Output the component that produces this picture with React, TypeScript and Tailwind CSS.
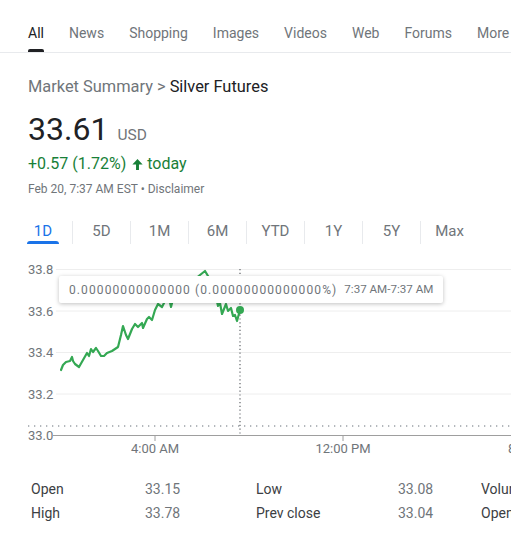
export default function App() {
  const nav = ["All", "News", "Shopping", "Images", "Videos", "Web", "Forums", "More"];
  const tabs = ["1D", "5D", "1M", "6M", "YTD", "1Y", "5Y", "Max"];
  const Y0 = 255;
  const pts: [number, number][] = [
    [61, 369], [63, 364], [66, 361], [70, 360], [72, 356], [73, 360], [75, 363], [79, 366], [83, 359], [87, 352],
    [89, 355], [91, 348], [93, 351], [96, 347], [98, 350], [101, 355], [104, 355], [107, 352], [112, 350], [118, 346],
    [121, 334], [123, 325], [126, 334], [128, 338], [132, 328], [135, 323], [138, 326], [142, 322], [143, 327], [147, 318],
    [149, 316], [152, 319], [155, 309], [158, 303], [162, 306], [165, 300], [168, 292], [171, 306], [175, 290], [185, 285],
    [195, 278], [200, 274], [205, 270], [208, 275], [212, 285], [216, 296], [218, 305], [220, 302], [222, 313], [226, 303],
    [228, 310], [231, 307], [233, 315], [235, 314], [237, 320], [240, 309],
  ];
  const d = pts.map((p, i) => `${i === 0 ? "M" : "L"}${p[0]} ${p[1] - Y0}`).join(" ");
  const grid = [
    { v: "33.8", y: 268.5 },
    { v: "33.6", y: 310 },
    { v: "33.4", y: 351.5 },
    { v: "33.2", y: 393 },
  ];
  const stats = [
    ["Open", "33.15", "Low", "33.08", "Volume"],
    ["High", "33.78", "Prev close", "33.04", "Open interest"],
  ];
  return (
    <div className="w-[511px] h-[534px] overflow-hidden bg-white font-['Roboto',sans-serif] text-[#202124]">
      <div className="flex h-[53px] gap-[25px] overflow-hidden whitespace-nowrap border-b border-[#e8eaed] pl-[28px]">
        {nav.map((n, i) => (
          <div key={n} className="flex h-full shrink-0 flex-col">
            <div className={i === 0 ? "pt-[23px] text-[14px] leading-[20px] text-[#202124]" : "pt-[23px] text-[14px] leading-[20px] text-[#70757a]"}>
              {n}
            </div>
            <div className="flex-1" />
            {i === 0 && <div className="h-[3px] rounded-t-[2px] bg-[#202124]" />}
          </div>
        ))}
      </div>

      <div className="px-[28px]">
        <div className="mt-[22px] text-[16.4px] leading-[24px]">
          <span className="text-[#70757a]">Market Summary &gt; </span>
          <span className="text-[#202124]">Silver Futures</span>
        </div>
        <div className="mt-[10px] flex items-baseline gap-[9px]">
          <span className="text-[32px] leading-[40px] text-[#202124]">33.61</span>
          <span className="text-[15.5px] text-[#70757a]">USD</span>
        </div>
        <div className="mt-[3px] flex items-center text-[16px] leading-[24px] text-[#188038]">
          <span>+0.57 (1.72%)</span>
          <svg viewBox="0 0 12 12" className="ml-[6px] mr-[4px] h-[11px] w-[11px]" fill="#188038">
            <path d="M6 0 L11.6 6 H7.6 V12 H4.4 V6 H0.4 Z" />
          </svg>
          <span>today</span>
        </div>
        <div className="mt-[5px] text-[12px] leading-[16px] text-[#70757a]">
          Feb 20, 7:37 AM EST • Disclaimer
        </div>
      </div>

      <div className="mt-[24px] flex pl-[14px]">
        {tabs.map((t, i) => (
          <div
            key={t}
            className={i === 0 ? "flex w-[58px] flex-col items-center" : "flex w-[58px] flex-col items-center border-l border-[#e8eaed]"}
          >
            <div className={i === 0 ? "text-[15px] leading-[20px] text-[#1a73e8]" : "text-[15px] leading-[20px] text-[#70757a]"}>{t}</div>
            <div className={i === 0 ? "h-[3px] w-[32px] rounded-t-[3px] bg-[#1a73e8]" : "h-[3px] w-[32px]"} />
          </div>
        ))}
      </div>

      <div className="relative mt-[12px] h-[221px]">
        <svg width="511" height="221" className="block">
          {grid.map((g) => (
            <g key={g.v}>
              <line x1="56" x2="511" y1={g.y - Y0} y2={g.y - Y0} stroke="#eeeeee" strokeWidth="1" />
              <text x="28" y={g.y - Y0 + 4.6} fontSize="13" fill="#70757a" fontFamily="Roboto, sans-serif">
                {g.v}
              </text>
            </g>
          ))}
          <text x="28" y={434.5 - Y0 + 4.6} fontSize="13" fill="#70757a" fontFamily="Roboto, sans-serif">
            33.0
          </text>
          <line x1="28" x2="511" y1={425 - Y0} y2={425 - Y0} stroke="#9aa0a6" strokeWidth="1.3" strokeDasharray="1.3 4.7" />
          <line x1="53" x2="511" y1={434.5 - Y0} y2={434.5 - Y0} stroke="#9e9e9e" strokeWidth="1" />
          <line x1="155" x2="155" y1={434.5 - Y0} y2={440 - Y0} stroke="#9e9e9e" strokeWidth="1" />
          <line x1="343" x2="343" y1={434.5 - Y0} y2={440 - Y0} stroke="#9e9e9e" strokeWidth="1" />
          <text x="155" y={452 - Y0} fontSize="13" fill="#70757a" textAnchor="middle" fontFamily="Roboto, sans-serif">
            4:00 AM
          </text>
          <text x="343" y={452 - Y0} fontSize="13" fill="#70757a" textAnchor="middle" fontFamily="Roboto, sans-serif">
            12:00 PM
          </text>
          <text x="508" y={452 - Y0} fontSize="13" fill="#70757a" fontFamily="Roboto, sans-serif">
            8:00 PM
          </text>
          <path d={d} fill="none" stroke="#34a853" strokeWidth="2.2" strokeLinejoin="round" strokeLinecap="round" />
          <line x1="240" x2="240" y1={268 - Y0} y2={434 - Y0} stroke="#5f6368" strokeWidth="1.2" strokeDasharray="1.2 2.6" />
          <circle cx="240" cy={309 - Y0} r="4" fill="#34a853" />
        </svg>
        <div className="absolute left-[59px] top-[20px] flex h-[27px] w-[384px] items-center whitespace-nowrap rounded-[2px] bg-white pl-[10px] text-[12px] text-[#70757a] shadow-[0_1px_4px_rgba(0,0,0,0.25)]">
          <span className="tracking-[1.1px]">0.00000000000000 (0.00000000000000%)</span>
          <span className="ml-[7px] text-[11.6px]">7:37 AM-7:37 AM</span>
        </div>
      </div>

      <div className="grid grid-cols-[114px_111px_142px_83px_100px] whitespace-nowrap pl-[31px] text-[14px] leading-[24px]">
        {stats.map((r) => (
          <div key={r[0]} className="contents">
            <div className="text-[#3c4043]">{r[0]}</div>
            <div className="text-[#70757a]">{r[1]}</div>
            <div className="text-[#3c4043]">{r[2]}</div>
            <div className="text-[#70757a]">{r[3]}</div>
            <div className="text-[#3c4043]">{r[4]}</div>
          </div>
        ))}
      </div>
    </div>
  );
}
